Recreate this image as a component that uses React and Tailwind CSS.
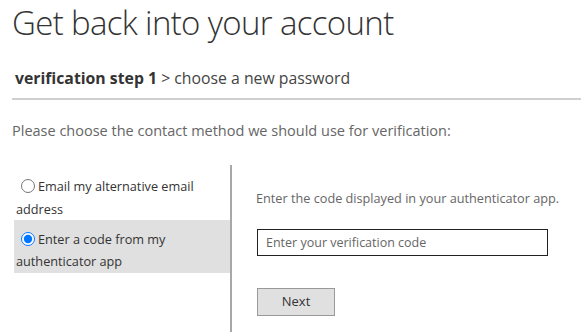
import React, { useState } from "react";

const App = () => {
  const [method, setMethod] = useState("app");

  return (
    <div className="w-[581px] h-[332px] overflow-hidden bg-white text-[#333] font-['Open_Sans',sans-serif]">
      <div className="pl-[12px]">
        <h1 className="text-[33px] font-light leading-[44px] pt-[1px] tracking-[-0.65px] text-[#333]">
          Get back into your account
        </h1>
        <div className="mt-[22px] pl-[3px] text-[15.8px] leading-[22px] text-[#444]">
          <span className="font-bold text-[#333]">verification step 1</span> &gt; choose a new password
        </div>
        <div className="mt-[9px] h-[2px] bg-[#cfcfcf]" />
        <p className="mt-[21px] text-[14.5px] leading-[20px] text-[#666]">
          Please choose the contact method we should use for verification:
        </p>

        <div className="mt-[24px] flex">
          <div className="w-[220px] pt-[10px] pl-[2px] border-r-2 border-[#a8a8a8] h-[200px]">
            <label
              className={`block px-[2px] text-[12.7px] leading-[22.5px] cursor-pointer ${method === "email" ? "bg-[#e0e0e0]" : ""}`}
            >
              <input
                type="radio"
                name="method"
                className="ml-[5px] mr-[3px] align-[-2px] w-[14px] h-[14px]"
                checked={method === "email"}
                onChange={() => setMethod("email")}
              />
              Email my alternative email address
            </label>
            <label
              className={`block px-[2px] pt-[8px] pb-[1px] text-[12.7px] leading-[22px] cursor-pointer ${method === "app" ? "bg-[#e0e0e0]" : ""}`}
            >
              <input
                type="radio"
                name="method"
                className="ml-[5px] mr-[3px] align-[-2px] w-[14px] h-[14px]"
                checked={method === "app"}
                onChange={() => setMethod("app")}
              />
              Enter a code from my authenticator app
            </label>
          </div>

          <div className="pl-[24px] pt-[23px]">
            <p className="text-[12.7px] leading-[20px] text-[#666]">
              Enter the code displayed in your authenticator app.
            </p>
            <input
              type="text"
              placeholder="Enter your verification code"
              className="mt-[21px] ml-[1px] w-[291px] h-[27px] border border-[#222] px-[8px] text-[12.5px] placeholder:text-[#666] outline-none"
            />
            <button className="block mt-[32px] ml-[1px] w-[78px] h-[28px] bg-[#e0e0e0] border border-[#999] text-[13px] text-[#333]">
              Next
            </button>
          </div>
        </div>
      </div>
    </div>
  );
};

export default App;
